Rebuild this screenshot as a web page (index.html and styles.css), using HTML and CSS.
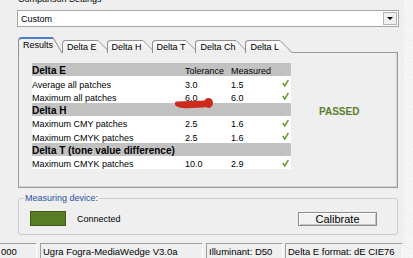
FILE: index.html
```html
<!DOCTYPE html>
<html lang="en">
<head>
    <meta charset="UTF-8">
    <meta name="viewport" content="width=device-width, initial-scale=1.0">
    <title>Comparison Settings</title>
    <link rel="stylesheet" href="styles.css">
</head>
<body>
    <svg class="defs" width="0" height="0">
        <defs>
            <linearGradient id="tabFill" x1="0" y1="0" x2="0" y2="1">
                <stop offset="0" stop-color="#fdfdfd"/>
                <stop offset="1" stop-color="#ebebeb"/>
            </linearGradient>
        </defs>
    </svg>
    <div class="window">
        <div class="group-label">Comparison Settings</div>
        <div class="combo">
            <span>Custom</span>
            <span class="combo-btn"><svg width="6" height="3" viewBox="0 0 6 3"><polygon points="0,0 6,0 3,3" fill="#000"/></svg></span>
        </div>

        <div class="tabs">
            <div class="tab active">
                <span class="tab-label">Results</span>
                <svg class="slant" width="9" height="16" viewBox="0 0 9 16"><polygon points="0,0 9,16 0,16" fill="#efefef"/><line x1="0" y1="0.5" x2="9" y2="16" stroke="#8f8f8f"/></svg>
            </div>
            <div class="tab">
                <span class="tab-label">Delta E</span>
                <svg class="slant" width="13" height="13" viewBox="0 0 13 13"><polygon points="0,0 13,13 0,13" fill="url(#tabFill)"/><line x1="0" y1="0.5" x2="13" y2="13.5" stroke="#8f8f8f"/></svg>
            </div>
            <div class="tab">
                <span class="tab-label">Delta H</span>
                <svg class="slant" width="13" height="13" viewBox="0 0 13 13"><polygon points="0,0 13,13 0,13" fill="url(#tabFill)"/><line x1="0" y1="0.5" x2="13" y2="13.5" stroke="#8f8f8f"/></svg>
            </div>
            <div class="tab">
                <span class="tab-label">Delta T</span>
                <svg class="slant" width="13" height="13" viewBox="0 0 13 13"><polygon points="0,0 13,13 0,13" fill="url(#tabFill)"/><line x1="0" y1="0.5" x2="13" y2="13.5" stroke="#8f8f8f"/></svg>
            </div>
            <div class="tab">
                <span class="tab-label">Delta Ch</span>
                <svg class="slant" width="13" height="13" viewBox="0 0 13 13"><polygon points="0,0 13,13 0,13" fill="url(#tabFill)"/><line x1="0" y1="0.5" x2="13" y2="13.5" stroke="#8f8f8f"/></svg>
            </div>
            <div class="tab">
                <span class="tab-label">Delta L</span>
                <svg class="slant" width="13" height="13" viewBox="0 0 13 13"><polygon points="0,0 13,13 0,13" fill="url(#tabFill)"/><line x1="0" y1="0.5" x2="13" y2="13.5" stroke="#8f8f8f"/></svg>
            </div>
        </div>

        <div class="page">
            <div class="results">
                <div class="table">
                    <div class="row head"><span class="name">Delta E</span><span>Tolerance</span><span>Measured</span><span></span></div>
                    <div class="row"><span>Average all patches</span><span>3.0</span><span>1.5</span><span class="check"><svg width="7" height="8" viewBox="0 0 7 8"><path d="M0.8 4 L2.8 7 L6.4 0.8" fill="none" stroke="#6b9a22" stroke-width="1.5"/></svg></span></div>
                    <div class="row"><span>Maximum all patches</span><span>6.0</span><span>6.0</span><span class="check"><svg width="7" height="8" viewBox="0 0 7 8"><path d="M0.8 4 L2.8 7 L6.4 0.8" fill="none" stroke="#6b9a22" stroke-width="1.5"/></svg></span></div>
                    <div class="row head"><span class="name wide">Delta H</span></div>
                    <div class="row"><span>Maximum CMY patches</span><span>2.5</span><span>1.6</span><span class="check"><svg width="7" height="8" viewBox="0 0 7 8"><path d="M0.8 4 L2.8 7 L6.4 0.8" fill="none" stroke="#6b9a22" stroke-width="1.5"/></svg></span></div>
                    <div class="row"><span>Maximum CMYK patches</span><span>2.5</span><span>1.6</span><span class="check"><svg width="7" height="8" viewBox="0 0 7 8"><path d="M0.8 4 L2.8 7 L6.4 0.8" fill="none" stroke="#6b9a22" stroke-width="1.5"/></svg></span></div>
                    <div class="row head"><span class="name wide">Delta T (tone value difference)</span></div>
                    <div class="row"><span>Maximum CMYK patches</span><span>10.0</span><span>2.9</span><span class="check"><svg width="7" height="8" viewBox="0 0 7 8"><path d="M0.8 4 L2.8 7 L6.4 0.8" fill="none" stroke="#6b9a22" stroke-width="1.5"/></svg></span></div>
                </div>
                <div class="verdict">PASSED</div>
            </div>
            <!-- red marker stroke drawn over the screenshot -->
            <div class="marker">
                <span class="marker-band"></span>
                <span class="marker-blob"></span>
            </div>
        </div>

        <fieldset class="device">
            <legend>Measuring device:</legend>
            <div class="device-row">
                <span class="swatch"></span>
                <span class="device-state">Connected</span>
                <button class="calibrate">Calibrate</button>
            </div>
        </fieldset>

        <div class="statusbar">
            <div class="cell first">000</div>
            <div class="cell wedge">Ugra Fogra-MediaWedge V3.0a</div>
            <div class="cell illum">Illuminant: D50</div>
            <div class="cell format">Delta E format: dE CIE76</div>
        </div>
    </div>
    <div class="desktop"></div>
</body>
</html>
```

FILE: styles.css
```css
html, body {
    margin: 0;
    padding: 0;
    height: 100%;
    overflow: hidden;
}
body {
    display: flex;
    font-family: "Liberation Sans", Arial, sans-serif;
    font-size: 9px;
    color: #000;
    background-color: #efefef;
}
.defs {
    position: absolute;
}
.window {
    width: 404px;
    flex: none;
    background-color: #efefef;
}
.desktop {
    flex: 1;
    background-color: #f6f6f6;
    background-image: repeating-linear-gradient(45deg, rgba(0,0,0,0.02) 0 1px, transparent 1px 3px);
}
.group-label {
    margin: -6px 0 0 18px;
    height: 11px;
    line-height: 11px;
}
.combo {
    margin: 5px 0 0 17px;
    width: 382px;
    height: 17px;
    box-sizing: border-box;
    border: 1px solid #a5a5a5;
    background-color: #fff;
    display: flex;
    align-items: center;
    justify-content: space-between;
    padding: 0 1px 0 3px;
}
.combo-btn {
    width: 14px;
    height: 13px;
    box-sizing: border-box;
    border: 1px solid #b3b3b3;
    background-color: #f0f0f0;
    display: flex;
    align-items: center;
    justify-content: center;
}
.combo-btn svg {
    display: block;
}
.tabs {
    display: flex;
    align-items: flex-end;
    margin: 10px 0 0 18px;
    height: 16px;
    position: relative;
    z-index: 1;
}
.tab {
    display: flex;
    height: 13px;
    margin-left: -4px;
}
.tab.active + .tab {
    margin-left: 0;
}
.tab-label {
    border-top: 1px solid #8f8f8f;
    border-left: 1px solid #8f8f8f;
    border-top-left-radius: 4px;
    padding: 0 1px 0 4px;
    background: linear-gradient(#fdfdfd, #ebebeb);
    line-height: 12px;
    white-space: nowrap;
}
.slant {
    display: block;
    flex: none;
}
.tab.active {
    margin-left: 0;
    height: 16px;
    position: relative;
    z-index: 2;
}
.tab.active .tab-label {
    border-top: 2px solid #4b80c8;
    background: #efefef;
    line-height: 13px;
    padding-right: 0;
}
.page {
    position: relative;
    margin: -1px 0 0 18px;
    width: 380px;
    height: 136px;
    box-sizing: border-box;
    border: 1px solid #9a9a9a;
    box-shadow: inset -1px -1px 0 #d4d4d4;
    padding: 10px 0 0 13px;
    background-color: #efefef;
}
.results {
    display: flex;
}
.table {
    width: 259px;
}
.row {
    display: grid;
    grid-template-columns: 153px 46px 49px 11px;
    height: 13.3px;
    line-height: 10px;
    align-items: end;
    background-color: #fff;
    white-space: nowrap;
}
.row.head {
    background-color: #c2c2c2;
}
.row .name {
    font-weight: bold;
    font-size: 10px;
}
.row .wide {
    grid-column: 1 / -1;
}
.check {
    align-self: center;
    padding-left: 2px;
}
.check svg {
    display: block;
}
.verdict {
    padding: 43px 0 0 28px;
    font-weight: bold;
    font-size: 10px;
    line-height: 12px;
    color: #5b7d2a;
}
/* marker: a fat red pen stroke under the tolerance value */
.marker {
    position: absolute;
    z-index: 5;
    left: 156px;
    top: 45px;
    width: 38px;
    height: 12px;
}
.marker-band {
    position: absolute;
    left: 0;
    top: 3px;
    width: 33px;
    height: 7px;
    background-color: #cc2a1b;
    border-radius: 2px 3px 6px 14px / 2px 3px 5px 5px;
    transform: rotate(-2deg);
}
.marker-blob {
    position: absolute;
    right: 0;
    top: 0;
    width: 9px;
    height: 10px;
    border-radius: 50%;
    background-color: #cc2a1b;
}
.device {
    margin: 5px 0 0 18px;
    width: 380px;
    min-inline-size: 0;
    box-sizing: border-box;
    border: 1px solid #cbcbcb;
    border-radius: 3px;
    padding: 7px 20px 8px 11px;
}
.device legend {
    padding: 0 1px;
    margin-left: -6px;
    line-height: 11px;
    color: #2d4fa3;
}
.device-row {
    display: flex;
    align-items: center;
    height: 15px;
}
.swatch {
    width: 36px;
    height: 15px;
    box-sizing: border-box;
    background-color: #587b25;
    border: 1px solid #3f5a1a;
}
.device-state {
    margin-left: 11px;
}
.calibrate {
    margin-left: auto;
    width: 79px;
    height: 14px;
    padding: 0;
    font-family: inherit;
    font-size: 11px;
    line-height: 12px;
    color: #000;
    background-color: #f2f2f2;
    border: 1px solid #8c8c8c;
    box-shadow: inset 1px 1px 0 #fff, inset -1px -1px 0 #c4c4c4;
}
.statusbar {
    display: flex;
    margin-top: 8px;
    height: 15px;
}
.cell {
    box-sizing: border-box;
    height: 15px;
    border-top: 1px solid #a0a0a0;
    border-left: 1px solid #a0a0a0;
    border-right: 1px solid #fff;
    padding: 1px 0 0 2px;
    font-size: 9.5px;
    line-height: 13px;
    white-space: nowrap;
    overflow: hidden;
}
.cell.first {
    width: 37px;
    border-left: none;
    padding-left: 1px;
}
.cell.wedge {
    width: 163px;
    margin-left: 3px;
}
.cell.illum {
    width: 77px;
    margin-left: 3px;
}
.cell.format {
    width: 118px;
    margin-left: 2px;
}
```
